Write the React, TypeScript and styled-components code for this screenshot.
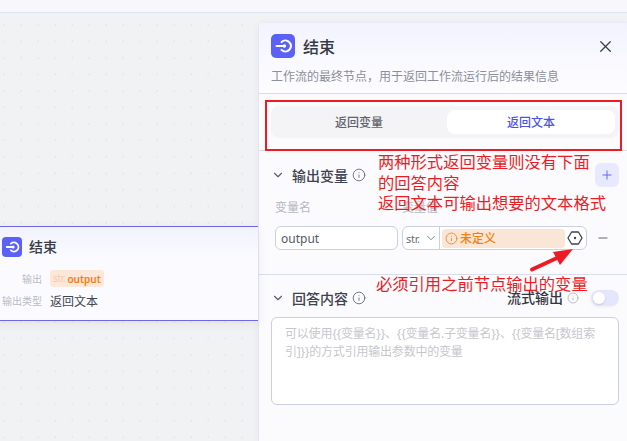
import styled, { createGlobalStyle } from "styled-components";
import { ChevronDown, Info, Minus, Plus, X } from "lucide-react";

const GlobalStyle = createGlobalStyle`
  html, body { margin: 0; padding: 0; }
  body {
    width: 627px;
    height: 441px;
    overflow: hidden;
    font-family: "Noto Sans", "Noto Sans CJK SC", sans-serif;
  }
`;

const Page = styled.div`
  position: relative;
  width: 627px;
  height: 441px;
  display: flex;
  flex-direction: column;
  overflow: hidden;
`;

const TopBar = styled.div`
  height: 12px;
  flex: none;
  background: #f7f7fc;
  border-bottom: 1px solid #e1e4f0;
`;

const Canvas = styled.div`
  position: relative;
  flex: 1;
  display: flex;
  justify-content: flex-end;
  padding-top: 9px;
  background-color: #f1f2f4;
  background-image: radial-gradient(#e6e7ea 1px, transparent 1px);
  background-size: 17px 16.5px;
  background-position: -4px 4px;
`;

const Node = styled.div`
  position: absolute;
  left: -11px;
  top: 213px;
  width: 269px;
  height: 95px;
  box-sizing: border-box;
  border: 1px solid #6c68e6;
  border-right: none;
  background: linear-gradient(#f2f2fe 0, #fbfbff 36px);
  box-shadow: 0 3px 10px rgba(30, 40, 80, 0.07);
  padding: 10px 0 0 12px;
`;

const NodeHead = styled.div`
  display: flex;
  align-items: center;
  gap: 7px;
  margin-bottom: 13px;
`;

const NodeTitle = styled.span`
  font-size: 14px;
  line-height: 20px;
  font-weight: 500;
  color: #383c47;
`;

const NodeRow = styled.div`
  display: flex;
  align-items: center;
  gap: 8px;
  height: 17px;
  margin-bottom: 5px;
`;

const NodeLabel = styled.span`
  width: 40px;
  text-align: right;
  font-size: 10px;
  color: #b9bcc6;
`;

const NodeValue = styled.span`
  font-size: 12px;
  color: #41454f;
`;

const OutputTag = styled.span`
  display: inline-flex;
  align-items: center;
  height: 17px;
  padding: 0 3px;
  border-radius: 3px;
  background: #fce8d9;
  color: #f97a12;
  font-size: 10px;
  font-weight: 600;
`;

const TagType = styled.span`
  color: #f5c9a9;
  font-size: 10px;
  font-weight: 400;
  letter-spacing: -0.3px;
  margin-right: 2px;
  margin-top: -2px;
`;

const IconBox = styled.div<{ $size: number; $radius: number }>`
  width: ${(p) => p.$size}px;
  height: ${(p) => p.$size}px;
  border-radius: ${(p) => p.$radius}px;
  flex: none;
  display: flex;
  align-items: center;
  justify-content: center;
  background: #5b61f6;
  color: #fff;
`;

const Panel = styled.div`
  width: 369px;
  box-sizing: border-box;
  flex: none;
  background: #fbfbfe;
  border-left: 1px solid #e4e6f1;
  border-top: 1px solid #e9ebf4;
  border-top-left-radius: 8px;
  box-shadow: -2px 0 6px rgba(30, 40, 80, 0.03);
`;

const PanelHeader = styled.div`
  height: 71px;
  box-sizing: border-box;
  padding: 11px 12px 0 12px;
  background: linear-gradient(#f3f3fe, #fdfdff);
  border-bottom: 1px solid #d9dcea;
`;

const TitleRow = styled.div`
  display: flex;
  align-items: center;
  gap: 8px;
`;

const PanelTitle = styled.span`
  flex: 1;
  font-size: 16px;
  font-weight: 500;
  color: #363a45;
`;

const CloseButton = styled.span`
  display: flex;
  color: #3a3f4b;
`;

const Description = styled.div`
  margin-top: 10px;
  font-size: 12px;
  line-height: 18px;
  color: #8b8f9a;
`;

const TabsSection = styled.div`
  height: 57px;
  box-sizing: border-box;
  padding: 12px 8px 0 12px;
  border-bottom: 1px solid #d9dcea;
`;

const Segmented = styled.div`
  display: grid;
  grid-template-columns: 1fr 1fr;
  height: 32px;
  box-sizing: border-box;
  padding: 4px;
  border-radius: 8px;
  background: #f4f4f6;
`;

const Segment = styled.div<{ $active?: boolean }>`
  display: flex;
  align-items: center;
  justify-content: center;
  border-radius: 8px;
  font-size: 12px;
  font-weight: 500;
  margin: ${(p) => (p.$active ? "0 0 0 2px" : "0 2px 0 0")};
  background: ${(p) => (p.$active ? "#fff" : "transparent")};
  color: ${(p) => (p.$active ? "#4d53e8" : "#5f636e")};
`;

const OutputSection = styled.div`
  height: 124px;
  box-sizing: border-box;
  padding: 12px 8px 0 12px;
  border-bottom: 1px solid #d9dcea;
`;

const SectionHead = styled.div`
  display: flex;
  align-items: center;
  height: 24px;
`;

const Chevron = styled(ChevronDown)`
  color: #5a5f6c;
  margin-right: 7px;
  flex: none;
`;

const SectionTitle = styled.span`
  font-size: 14px;
  font-weight: 500;
  color: #3f434f;
  margin-right: 4px;
`;

const AddButton = styled.span`
  margin-left: auto;
  width: 24px;
  height: 24px;
  border-radius: 6px;
  background: #e9e9fd;
  color: #5b61f6;
  display: flex;
  align-items: center;
  justify-content: center;
`;

const FieldLabels = styled.div`
  display: grid;
  grid-template-columns: 127px 1fr;
  padding-left: 4px;
  margin-top: 12px;
  font-size: 12px;
  line-height: 18px;
  color: #b5b8c1;
`;

const FieldRow = styled.div`
  display: flex;
  align-items: center;
  padding-left: 4px;
  margin-top: 9px;
`;

const NameInput = styled.div`
  width: 123px;
  height: 24px;
  box-sizing: border-box;
  display: flex;
  align-items: center;
  padding-left: 5px;
  border: 1px solid #cbcfe2;
  border-radius: 6px;
  background: #fff;
  font-size: 12px;
  color: #55595f;
`;

const ValueInput = styled.div`
  margin-left: 4px;
  width: 185px;
  height: 24px;
  box-sizing: border-box;
  display: flex;
  align-items: center;
  border: 1px solid #cbcfe2;
  border-radius: 6px;
  background: #fff;
`;

const TypeSelect = styled.div`
  width: 37px;
  height: 22px;
  flex: none;
  box-sizing: border-box;
  display: flex;
  align-items: center;
  justify-content: space-between;
  padding: 0 1px 0 3px;
  border-right: 1px solid #cbcfe2;
  font-size: 11px;
  letter-spacing: -0.3px;
  color: #6b6f7a;
`;

const UndefinedTag = styled.div`
  width: 123px;
  height: 19px;
  margin-left: 2px;
  flex: none;
  display: flex;
  align-items: center;
  gap: 2px;
  padding-left: 3px;
  box-sizing: border-box;
  border-radius: 4px;
  background: #f9e6d7;
  color: #f57f0a;
  font-size: 12px;
  font-weight: 500;
`;

const RefIcon = styled.span`
  display: flex;
  margin-left: 2px;
  color: #3d4250;
`;

const RemoveIcon = styled.span`
  display: flex;
  margin-left: 9px;
  color: #555a66;
`;

const AnswerSection = styled.div`
  padding: 11px 8px 0 12px;
`;

const StreamLabel = styled.span`
  margin-left: auto;
  font-size: 14px;
  line-height: 14px;
  font-weight: 500;
  color: #33363f;
  margin-right: 4px;
`;

const Toggle = styled.span`
  display: flex;
  align-items: center;
  width: 28px;
  height: 16px;
  margin-left: 12px;
  border-radius: 8px;
  background: #e4e6fb;
  box-shadow: -1px 1px 3px rgba(30, 40, 80, 0.06);
`;

const Knob = styled.span`
  width: 12px;
  height: 12px;
  margin-left: 2px;
  border-radius: 50%;
  background: #fff;
  box-shadow: 0 1px 2px rgba(30, 40, 80, 0.15);
`;

const AnswerBox = styled.div`
  height: 88px;
  box-sizing: border-box;
  margin-top: 7px;
  padding: 7px 13px;
  border: 1px solid #cbcfe2;
  border-radius: 6px;
  background: #fff;
  font-size: 12px;
  line-height: 18px;
  letter-spacing: -0.2px;
  color: #c6c7cc;
`;

const HighlightBox = styled.div`
  position: absolute;
  left: 265px;
  top: 100px;
  width: 357px;
  height: 51px;
  box-sizing: border-box;
  border: 2px solid #ed1c24;
`;

const Note = styled.div<{ $left: number; $top: number }>`
  position: absolute;
  left: ${(p) => p.$left}px;
  top: ${(p) => p.$top}px;
  font-size: 16.3px;
  line-height: 20.5px;
  color: #ed1c24;
  white-space: pre;
`;

const Arrow = styled.svg`
  position: absolute;
  left: 525px;
  top: 242px;
`;

const EndIcon = ({ size }: { size: number }) => (
  <svg width={size} height={size} viewBox="0 0 24 24" fill="none">
    <path
      d="M10.5 7.6a6 6 0 1 1 0 8.8"
      stroke="currentColor"
      strokeWidth="2.4"
      strokeLinecap="round"
    />
    <path
      d="M5 12h8.5"
      stroke="currentColor"
      strokeWidth="2.4"
      strokeLinecap="round"
    />
    <circle cx="13.5" cy="12" r="2" fill="currentColor" />
  </svg>
);

const HexIcon = () => (
  <svg width="16" height="16" viewBox="0 0 16 16" fill="none">
    <path
      d="M4.6 2h6.8L15 8l-3.6 6H4.6L1 8z"
      stroke="currentColor"
      strokeWidth="1.3"
      strokeLinejoin="round"
    />
    <circle cx="8" cy="8" r="1.2" fill="currentColor" />
  </svg>
);

export default function App() {
  return (
    <Page>
      <GlobalStyle />
      <TopBar />
      <Canvas>
        <Node>
          <NodeHead>
            <IconBox $size={20} $radius={4}>
              <EndIcon size={18} />
            </IconBox>
            <NodeTitle>结束</NodeTitle>
          </NodeHead>
          <NodeRow>
            <NodeLabel>输出</NodeLabel>
            <OutputTag>
              <TagType>str.</TagType>output
            </OutputTag>
          </NodeRow>
          <NodeRow>
            <NodeLabel>输出类型</NodeLabel>
            <NodeValue>返回文本</NodeValue>
          </NodeRow>
        </Node>
        <Panel>
          <PanelHeader>
            <TitleRow>
              <IconBox $size={24} $radius={5}>
                <EndIcon size={22} />
              </IconBox>
              <PanelTitle>结束</PanelTitle>
              <CloseButton>
                <X size={19} strokeWidth={1.6} />
              </CloseButton>
            </TitleRow>
            <Description>工作流的最终节点，用于返回工作流运行后的结果信息</Description>
          </PanelHeader>
          <TabsSection>
            <Segmented>
              <Segment>返回变量</Segment>
              <Segment $active>返回文本</Segment>
            </Segmented>
          </TabsSection>
          <OutputSection>
            <SectionHead>
              <Chevron size={14} strokeWidth={2} />
              <SectionTitle>输出变量</SectionTitle>
              <Info size={14} strokeWidth={1.4} color="#5a5f6c" />
              <AddButton>
                <Plus size={14} strokeWidth={1.6} />
              </AddButton>
            </SectionHead>
            <FieldLabels>
              <span>变量名</span>
              <span>变量值</span>
            </FieldLabels>
            <FieldRow>
              <NameInput>output</NameInput>
              <ValueInput>
                <TypeSelect>
                  str.
                  <ChevronDown size={14} strokeWidth={1.4} color="#6b6f7a" />
                </TypeSelect>
                <UndefinedTag>
                  <Info size={13} strokeWidth={1.5} />
                  未定义
                </UndefinedTag>
                <RefIcon>
                  <HexIcon />
                </RefIcon>
              </ValueInput>
              <RemoveIcon>
                <Minus size={14} strokeWidth={1.6} />
              </RemoveIcon>
            </FieldRow>
          </OutputSection>
          <AnswerSection>
            <SectionHead>
              <Chevron size={14} strokeWidth={2} />
              <SectionTitle>回答内容</SectionTitle>
              <Info size={14} strokeWidth={1.4} color="#5a5f6c" />
              <StreamLabel>流式输出</StreamLabel>
              <Info size={12} strokeWidth={1.3} color="#9a9ea8" />
              <Toggle>
                <Knob />
              </Toggle>
            </SectionHead>
            <AnswerBox>
              {"可以使用{{变量名}}、{{变量名.子变量名}}、{{变量名[数组索引]}}的方式引用输出参数中的变量"}
            </AnswerBox>
          </AnswerSection>
        </Panel>
      </Canvas>
      <HighlightBox />
      <Note $left={378} $top={152}>
        {"两种形式返回变量则没有下面\n的回答内容\n返回文本可输出想要的文本格式"}
      </Note>
      <Note $left={376} $top={274}>
        必须引用之前节点输出的变量
      </Note>
      <Arrow width="52" height="34" viewBox="0 0 52 34">
        <path d="M7 27.5L32 16" stroke="#ed1c24" strokeWidth="4" strokeLinecap="round" />
        <path d="M48 7L28 10L35 23z" fill="#ed1c24" />
      </Arrow>
    </Page>
  );
}
